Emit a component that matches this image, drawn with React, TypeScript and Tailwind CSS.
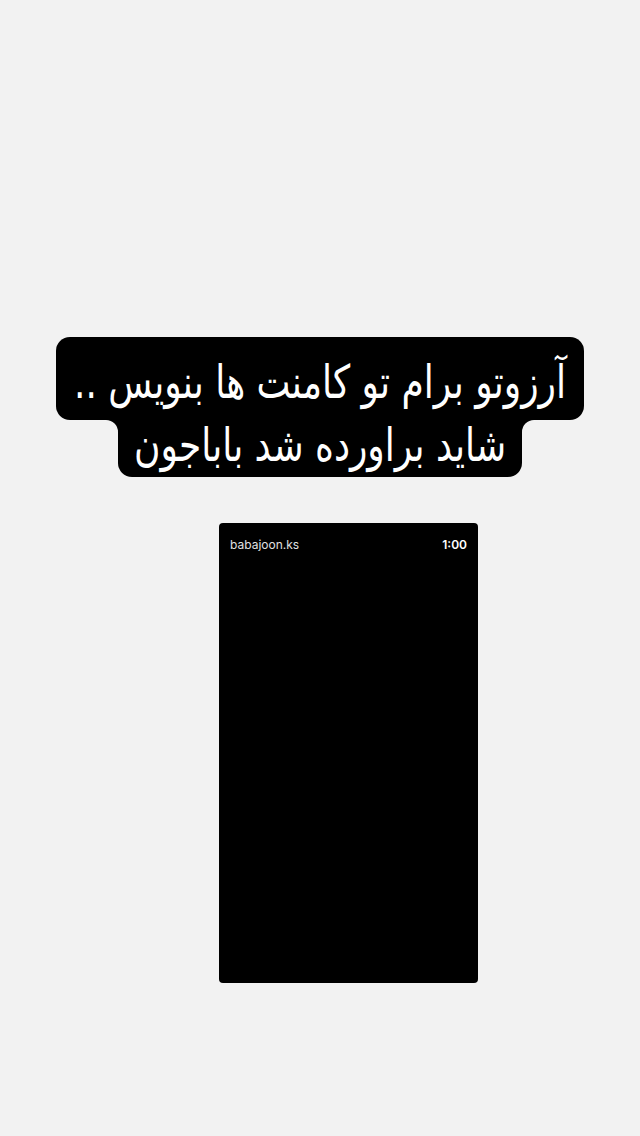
import React from 'react';

const lines = ['آرزوتو برام تو کامنت ها بنویس ..', 'شاید براورده شد باباجون'];

export default function App() {
  return (
    <div className="min-h-[1136px] w-full bg-[#f2f2f2] flex flex-col items-center">
      <div dir="rtl" className="mt-[337px] flex flex-col items-center" style={{ fontFamily: '"DejaVu Sans Condensed", "DejaVu Sans", sans-serif' }}>
        <div className="w-[528px] h-[83px] bg-black rounded-[14px] flex items-center justify-center pt-[6px]">
          <span className="text-white text-[40px] leading-none whitespace-nowrap inline-block scale-y-[1.15]">{lines[0]}</span>
        </div>
        <div className="relative w-[404px] h-[57px] bg-black rounded-b-[14px] flex items-center justify-center pb-[8px]">
          <div className="absolute -left-[12px] top-0 w-[12px] h-[12px] bg-black">
            <div className="w-full h-full bg-[#f2f2f2] rounded-tr-[12px]" />
          </div>
          <div className="absolute -right-[12px] top-0 w-[12px] h-[12px] bg-black">
            <div className="w-full h-full bg-[#f2f2f2] rounded-tl-[12px]" />
          </div>
          <span className="text-white text-[40px] leading-none whitespace-nowrap inline-block scale-y-[1.15]">{lines[1]}</span>
        </div>
      </div>

      <div className="mt-[46px] w-[259px] h-[460px] bg-black rounded-[4px] ml-[57px] px-[11px] pt-[13px]" style={{ fontFamily: 'Inter, "Liberation Sans", sans-serif' }}>
        <div className="flex justify-between items-center">
          <span className="text-[#e0e0e0] text-[12px]">babajoon.ks</span>
          <span className="text-white text-[12px] font-semibold">1:00</span>
        </div>
      </div>
    </div>
  );
}
